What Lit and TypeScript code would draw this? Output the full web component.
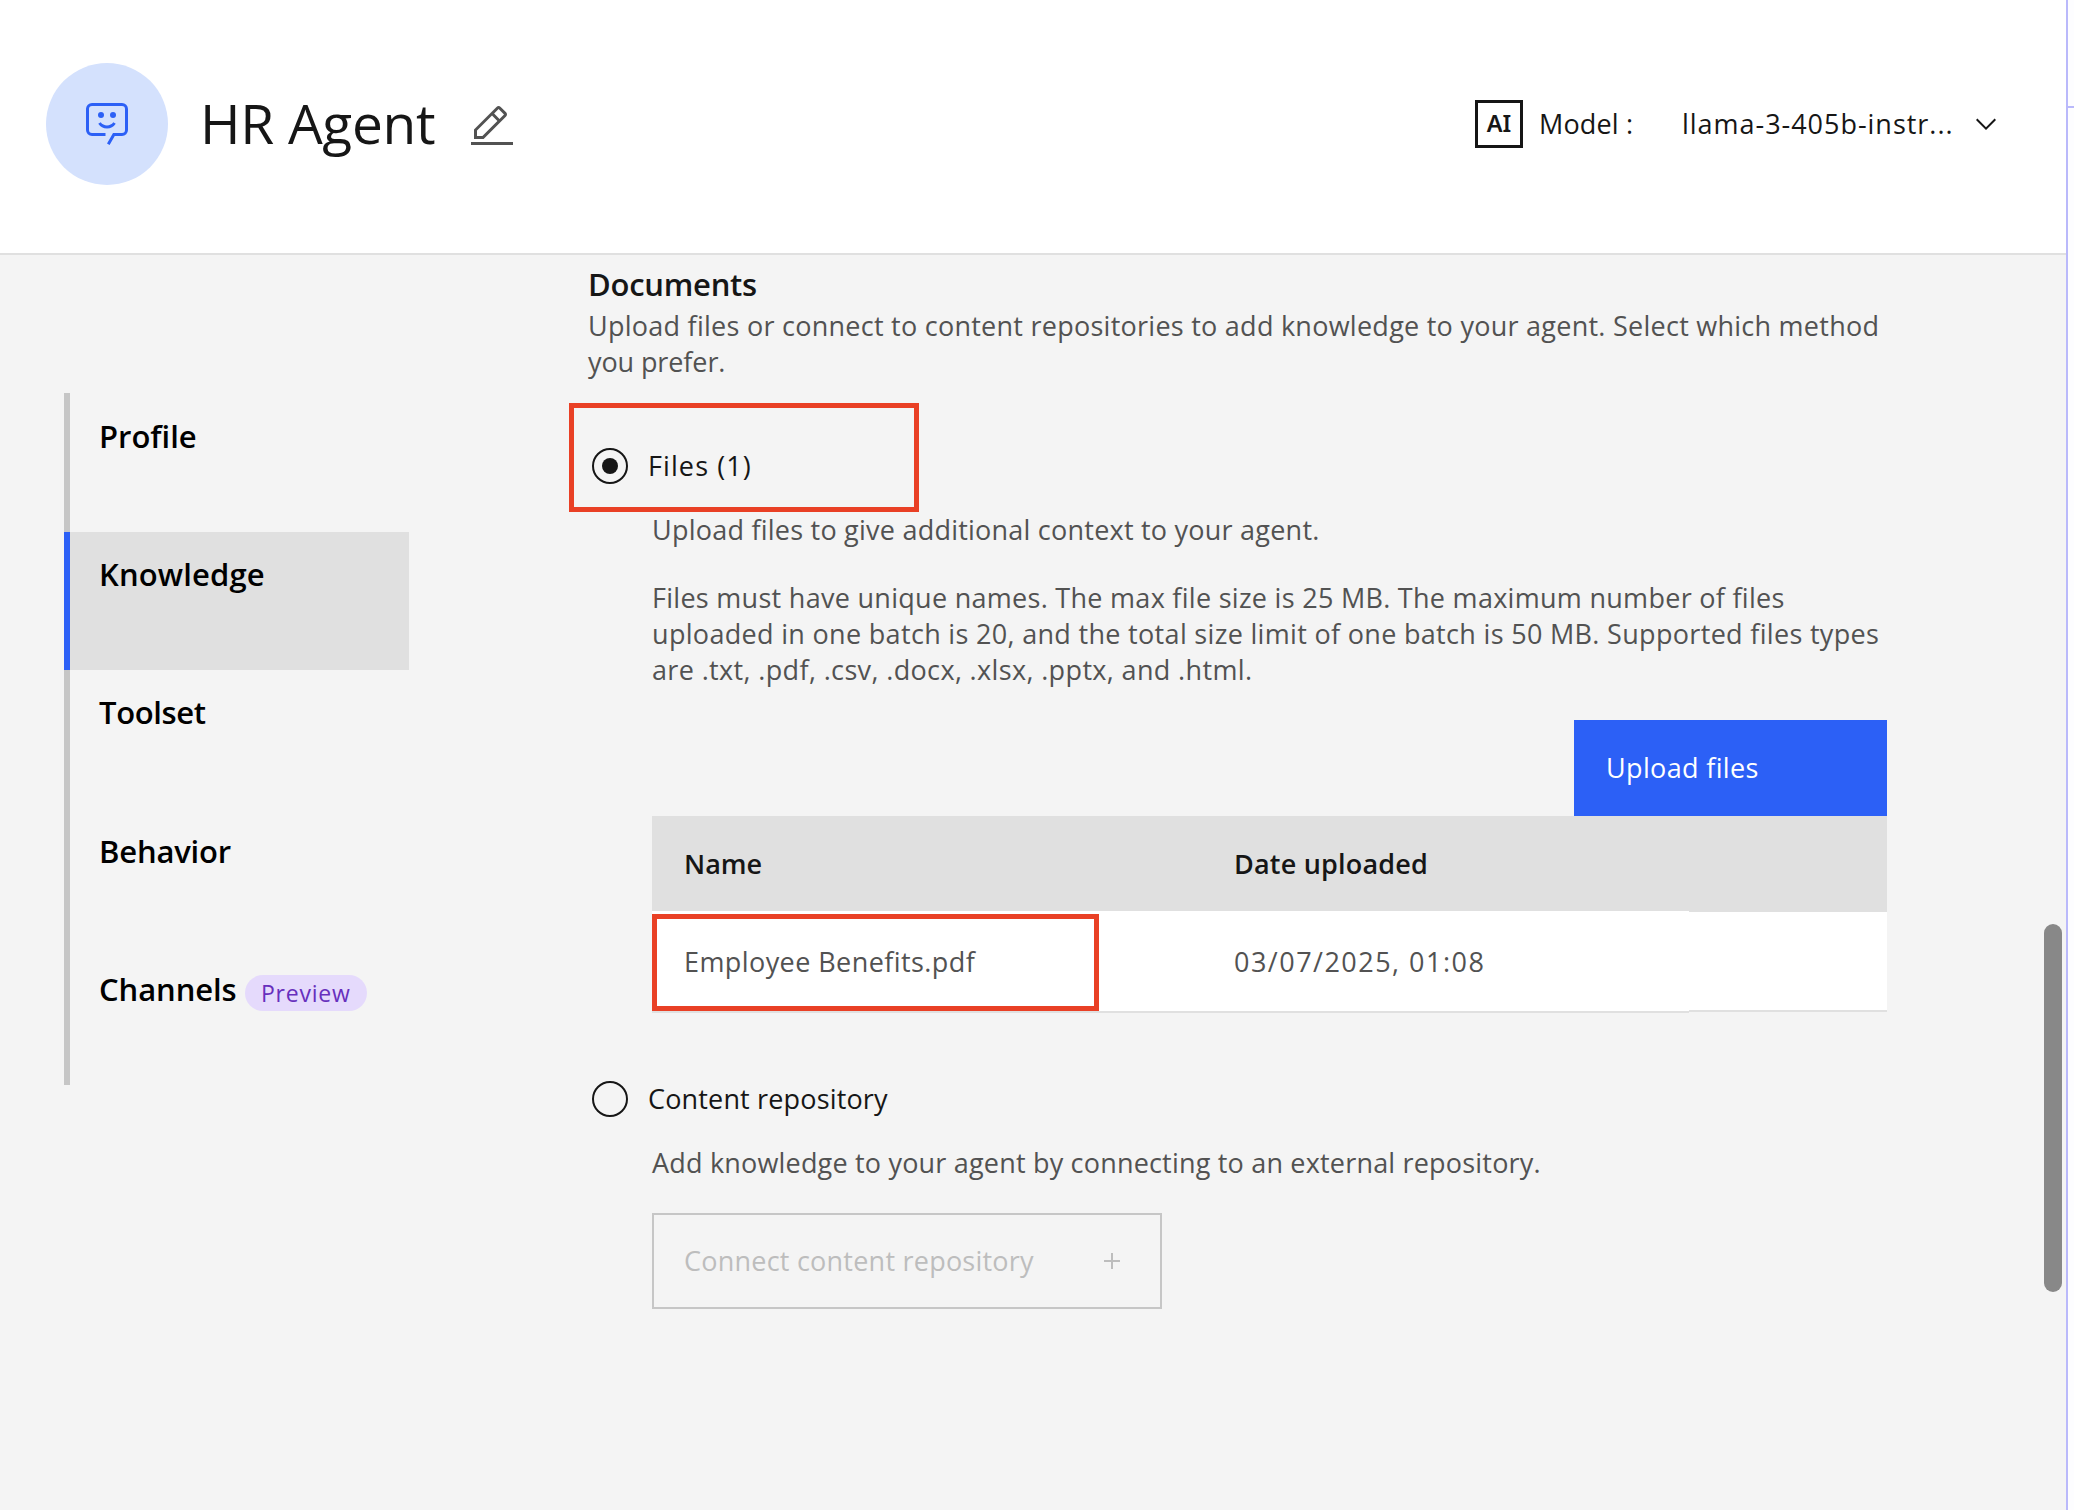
import { LitElement, html, css } from "lit";
import { customElement, state } from "lit/decorators.js";

interface NavItem {
  label: string;
  badge?: string;
}

@customElement("agent-header")
class AgentHeader extends LitElement {
  static styles = css`
    :host {
      display: flex;
      align-items: center;
      box-sizing: border-box;
      height: 255px;
      padding: 0 64px 5px 46px;
      background: #fff;
      border-bottom: 2px solid #e0e0e0;
      color: #161616;
      font-size: 27px;
      line-height: 36px;
      white-space: nowrap;
    }
    .avatar {
      display: flex;
      align-items: center;
      justify-content: center;
      width: 122px;
      height: 122px;
      border-radius: 50%;
      background: #d4e1fd;
      color: #2c60f6;
    }
    svg {
      display: block;
      fill: currentColor;
    }
    .title {
      width: 268px;
      margin: 0 0 0 32px;
      padding-bottom: 2px;
      font-size: 55px;
      font-weight: 400;
      line-height: 64px;
      letter-spacing: -0.3px;
    }
    .edit {
      padding-top: 6px;
      color: #525252;
    }
    .model {
      display: flex;
      align-items: center;
      margin-left: auto;
    }
    .ai {
      box-sizing: border-box;
      width: 48px;
      height: 48px;
      margin-right: 16px;
      border: 3px solid #161616;
      font: 600 23.5px/40px "Noto Sans", sans-serif;
      letter-spacing: 0;
      text-align: center;
    }
    .key {
      width: 143px;
      letter-spacing: 0.15px;
    }
    .value {
      width: 288px;
      letter-spacing: 0.97px;
    }
  `;

  render() {
    return html`
      <div class="avatar">
        <svg width="48" height="48" viewBox="0 0 32 32">
          <path d="M16 19a6.99 6.99 0 0 1-5.833-3.129l1.666-1.107a5 5 0 0 0 8.334 0l1.666 1.107A6.99 6.99 0 0 1 16 19z" />
          <circle cx="20" cy="10" r="2" />
          <circle cx="12" cy="10" r="2" />
          <path d="M17.736 30 16 29l4-7h6a2 2 0 0 0 2-2V6a2 2 0 0 0-2-2H6a2 2 0 0 0-2 2v14a2 2 0 0 0 2 2h9v2H6a4 4 0 0 1-4-4V6a4 4 0 0 1 4-4h20a4 4 0 0 1 4 4v14a4 4 0 0 1-4 4h-4.835z" />
        </svg>
      </div>
      <h1 class="title">HR Agent</h1>
      <div class="edit">
        <svg width="48" height="48" viewBox="0 0 32 32">
          <path d="M2 26h28v2H2zM25.4 9c.8-.8.8-2 0-2.8l-3.6-3.6c-.8-.8-2-.8-2.8 0l-15 15V24h6.4l15-15zm-5-5L24 7.6l-3 3L17.400 7l3-3zM6 22v-3.600l10-10 3.600 3.600-10 10H6z" />
        </svg>
      </div>
      <div class="model">
        <div class="ai">AI</div>
        <div class="key">Model :</div>
        <div class="value">llama-3-405b-instr...</div>
        <svg width="32" height="32" viewBox="0 0 16 16">
          <path d="M8 11 3 6l.7-.7L8 9.600l4.300-4.300.7.7z" />
        </svg>
      </div>
    `;
  }
}

@customElement("agent-nav")
class AgentNav extends LitElement {
  @state() active = "Knowledge";

  private items: NavItem[] = [
    { label: "Profile" },
    { label: "Knowledge" },
    { label: "Toolset" },
    { label: "Behavior" },
    { label: "Channels", badge: "Preview" },
  ];

  static styles = css`
    :host {
      display: grid;
      grid-template-rows: 139px 138px 138px 139px 138px;
      align-self: flex-start;
      width: 345px;
      margin: 138px 0 0 64px;
      color: #000;
      font-size: 31px;
      font-weight: 600;
      line-height: 40px;
    }
    .item {
      display: flex;
      align-items: flex-start;
      padding: 22px 0 0 29px;
      border-left: 6px solid #c6c6c6;
    }
    .active {
      background: #e0e0e0;
      border-left-color: #2c60f6;
    }
    .label {
      min-width: 146px;
    }
    .Profile,
    .Behavior {
      padding-top: 1px;
    }
    .Knowledge {
      letter-spacing: 0.15px;
    }
    .Toolset {
      letter-spacing: -0.35px;
    }
    .Behavior {
      letter-spacing: -0.2px;
    }
    .Channels {
      letter-spacing: -0.09px;
    }
    .badge {
      box-sizing: border-box;
      width: 122px;
      height: 36px;
      margin-top: 6px;
      padding-left: 16px;
      border-radius: 18px;
      background: #e5dafc;
      color: #6730bd;
      font-size: 23px;
      font-weight: 400;
      line-height: 36px;
      letter-spacing: 0.78px;
    }
  `;

  render() {
    return this.items.map(
      (i) => html`
        <div class="item ${i.label === this.active ? "active" : ""}" @click=${() => (this.active = i.label)}>
          <span class="label ${i.label}">${i.label}</span>
          ${i.badge ? html`<span class="badge">${i.badge}</span>` : ""}
        </div>
      `
    );
  }
}

@customElement("knowledge-panel")
class KnowledgePanel extends LitElement {
  @state() source = "files";

  static styles = css`
    :host {
      display: block;
      width: 1299px;
      margin-left: 179px;
      padding-top: 9px;
      color: #525252;
      font-size: 27px;
      line-height: 36px;
      letter-spacing: 0.23px;
      white-space: nowrap;
    }
    h2 {
      margin: 0 0 4px;
      color: #161616;
      font-size: 31px;
      font-weight: 600;
      line-height: 40px;
      letter-spacing: -0.25px;
    }
    p {
      margin: 0 0 32px;
    }
    .line {
      display: block;
    }
    .intro {
      margin-bottom: 68px;
      letter-spacing: 0.257px;
    }
    .tight {
      letter-spacing: -0.1px;
    }
    .rules-a {
      letter-spacing: 0.285px;
    }
    .rules-b {
      letter-spacing: 0.317px;
    }
    .rules-c {
      letter-spacing: 0.359px;
    }
    .option {
      position: relative;
      display: flex;
      align-items: center;
      gap: 20px;
      height: 36px;
      margin-bottom: 28px;
      padding-left: 4px;
      color: #161616;
    }
    .radio {
      display: flex;
      align-items: center;
      justify-content: center;
      box-sizing: border-box;
      width: 36px;
      height: 36px;
      border: 2px solid #161616;
      border-radius: 50%;
    }
    .dot {
      width: 16px;
      height: 16px;
      border-radius: 50%;
      background: #161616;
    }
    .files-label {
      letter-spacing: 1.1px;
    }
    .repo-label {
      letter-spacing: 0.16px;
    }
    .detail {
      margin-left: 64px;
    }
    .mark {
      position: absolute;
      box-sizing: border-box;
      border: 5px solid #e94025;
    }
    .mark-option {
      left: -19px;
      top: -45px;
      width: 350px;
      height: 109px;
    }
    .mark-cell {
      left: 0;
      top: 3px;
      width: 447px;
      height: 97px;
    }
    .upload {
      box-sizing: border-box;
      width: 313px;
      height: 96px;
      margin-left: auto;
      padding: 30px 0 0 32px;
      background: #2c60f6;
      color: #fff;
      letter-spacing: 0.35px;
    }
    .table {
      display: grid;
      grid-template-columns: 550px 487px 198px;
      grid-template-rows: 95px 102px;
      margin-bottom: 68px;
    }
    .th,
    .td {
      position: relative;
      box-sizing: border-box;
      padding-left: 32px;
    }
    .th {
      padding-top: 30px;
      background: #e0e0e0;
      color: #161616;
      font-weight: 600;
      letter-spacing: 0.2px;
    }
    .th-name {
      letter-spacing: 0;
    }
    .td {
      padding-top: 33px;
      background: #fff;
      border-bottom: 2px solid #e0e0e0;
      letter-spacing: 0.42px;
    }
    .td-date {
      letter-spacing: 1.48px;
    }
    .th-end {
      margin-bottom: -1px;
    }
    .td-end {
      margin: 1px 0;
    }
    .add {
      letter-spacing: 0.19px;
    }
    .connect {
      display: flex;
      align-items: center;
      box-sizing: border-box;
      width: 510px;
      height: 96px;
      padding-left: 30px;
      border: 2px solid #c6c6c6;
      color: #bdbdbd;
      letter-spacing: 0.23px;
    }
    .connect-text {
      width: 420px;
    }
    svg {
      display: block;
    }
  `;

  private radio(value: string, label: string, cls: string, marked = false) {
    return html`
      <div class="option" @click=${() => (this.source = value)}>
        <span class="radio">${this.source === value ? html`<span class="dot"></span>` : ""}</span>
        <span class=${cls}>${label}</span>
        ${marked ? html`<span class="mark mark-option"></span>` : ""}
      </div>
    `;
  }

  render() {
    return html`
      <h2>Documents</h2>
      <p class="intro">
        <span class="line">Upload files or connect to content repositories to add knowledge to your agent. Select which method</span>
        <span class="line tight">you prefer.</span>
      </p>
      ${this.radio("files", "Files (1)", "files-label", true)}
      <div class="detail">
        <p>Upload files to give additional context to your agent.</p>
        <p>
          <span class="line rules-a">Files must have unique names. The max file size is 25 MB. The maximum number of files</span>
          <span class="line rules-b">uploaded in one batch is 20, and the total size limit of one batch is 50 MB. Supported files types</span>
          <span class="line rules-c">are .txt, .pdf, .csv, .docx, .xlsx, .pptx, and .html.</span>
        </p>
        <div class="upload">Upload files</div>
        <div class="table">
          <div class="th th-name">Name</div>
          <div class="th">Date uploaded</div>
          <div class="th th-end"></div>
          <div class="td">Employee Benefits.pdf<span class="mark mark-cell"></span></div>
          <div class="td td-date">03/07/2025, 01:08</div>
          <div class="td td-end"></div>
        </div>
      </div>
      ${this.radio("repository", "Content repository", "repo-label")}
      <div class="detail">
        <p class="add">Add knowledge to your agent by connecting to an external repository.</p>
        <div class="connect">
          <span class="connect-text">Connect content repository</span>
          <svg width="16" height="16" viewBox="0 0 16 16"><path d="M7 0h2v7h7v2H9v7H7V9H0V7h7z" fill="#bdbdbd" /></svg>
        </div>
      </div>
    `;
  }
}

@customElement("app-root")
class AppRoot extends LitElement {
  static styles = css`
    :host {
      display: flex;
      width: 2074px;
      height: 1510px;
      overflow: hidden;
      background: #fdfdff;
      font-family: "Open Sans", "Noto Sans", sans-serif;
    }
    .page {
      display: flex;
      flex-direction: column;
      width: 2066px;
      border-right: 2px solid #bab9fb;
      background: #f4f4f4;
    }
    .body {
      display: flex;
      flex: 1;
    }
    .scrollbar {
      width: 18px;
      height: 368px;
      margin: 669px 4px 0 auto;
      border-radius: 9px;
      background: #888;
    }
    .tick {
      width: 6px;
      height: 2px;
      margin-top: 106px;
      background: #bab9fb;
    }
  `;

  render() {
    return html`
      <div class="page">
        <agent-header></agent-header>
        <div class="body">
          <agent-nav></agent-nav>
          <knowledge-panel></knowledge-panel>
          <div class="scrollbar"></div>
        </div>
      </div>
      <div class="tick"></div>
    `;
  }
}
